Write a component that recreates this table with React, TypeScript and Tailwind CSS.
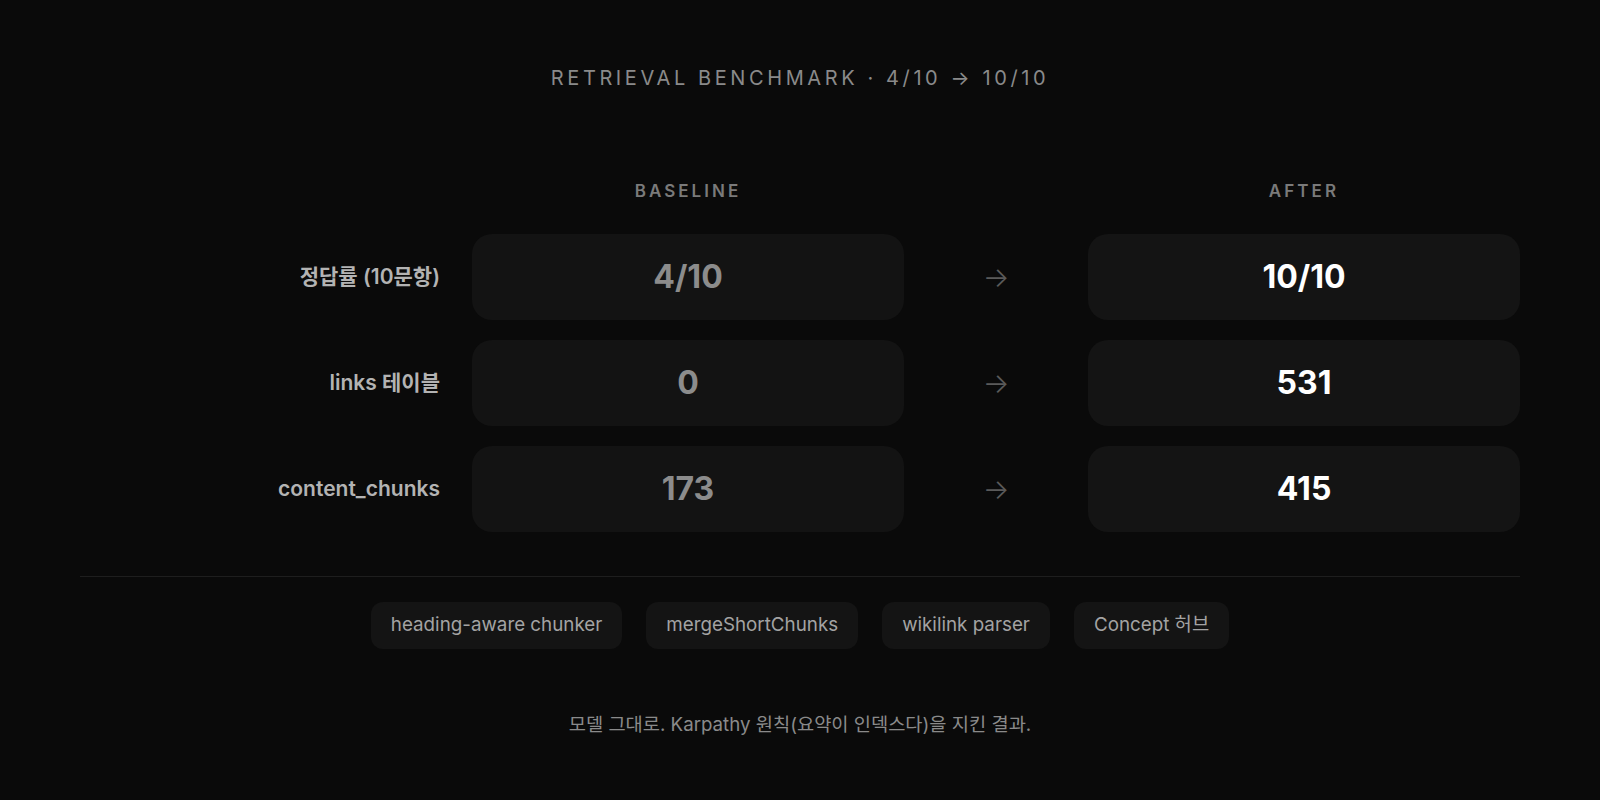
const rows = [
  { label: '정답률 (10문항)', before: '4/10', after: '10/10' },
  { label: 'links 테이블', before: '0', after: '531' },
  { label: 'content_chunks', before: '173', after: '415' },
];

const chips = ['heading-aware chunker', 'mergeShortChunks', 'wikilink parser', 'Concept 허브'];

export default function App() {
  return (
    <div
      className="min-h-[800px] w-full bg-[#0a0a0a] px-20 pt-[64px]"
      style={{ fontFamily: 'Inter, "Noto Sans CJK KR", sans-serif' }}
    >
      <div className="text-center text-[20px] leading-7 tracking-[0.18em] text-[#8a8a8a]">
        RETRIEVAL BENCHMARK · 4/10 → 10/10
      </div>

      <div className="mt-[87px] grid grid-cols-[360px_1fr_120px_1fr] gap-x-8">
        {/* column headers */}
        <div />
        <div className="text-center text-[17px] font-semibold leading-6 tracking-[0.18em] text-[#7a7a7a]">BASELINE</div>
        <div />
        <div className="text-center text-[17px] font-semibold leading-6 tracking-[0.18em] text-[#7a7a7a]">AFTER</div>
      </div>

      <div className="mt-[31px] flex flex-col gap-5">
        {rows.map(r => (
          <div key={r.label} className="grid grid-cols-[360px_1fr_120px_1fr] items-center gap-x-8">
            <div className="text-right text-[21px] font-semibold text-[#b3b3b3]">{r.label}</div>
            <div className="flex h-[86px] items-center justify-center rounded-[20px] bg-[#131313] text-[32px] font-bold text-[#8c8c8c]">
              {r.before}
            </div>
            <div className="text-center text-[28px] font-light text-[#5a5a5a]">→</div>
            <div className="flex h-[86px] items-center justify-center rounded-[20px] bg-[#141414] text-[32px] font-bold text-white">
              {r.after}
            </div>
          </div>
        ))}
      </div>

      <div className="mt-[44px] h-px bg-[#1e1e1e]" />

      <div className="mt-[25px] flex justify-center gap-6">
        {chips.map(c => (
          <div key={c} className="flex h-[47px] items-center rounded-[12px] bg-[#141414] px-5 text-[18.8px] text-[#a3a3a3]">
            {c}
          </div>
        ))}
      </div>

      <div className="mt-[62px] text-center text-[18.7px] leading-7 text-[#8a8a8a]">
        모델 그대로. Karpathy 원칙(요약이 인덱스다)을 지킨 결과.
      </div>
    </div>
  );
}
